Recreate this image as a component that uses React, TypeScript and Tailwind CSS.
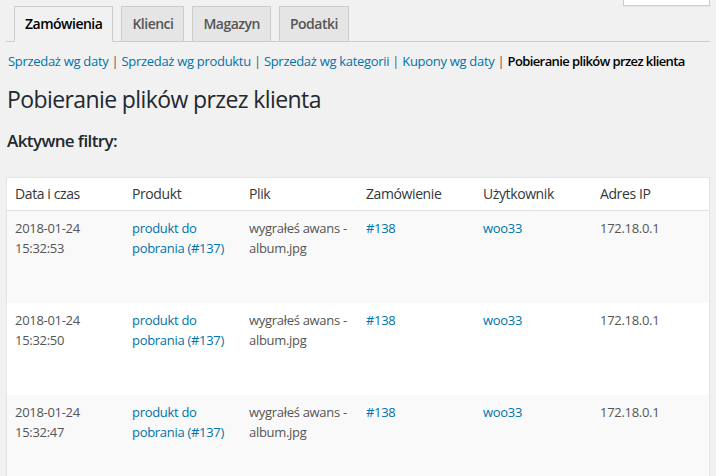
const tabs = ['Zamówienia', 'Klienci', 'Magazyn', 'Podatki'];

const reportLinks = [
  'Sprzedaż wg daty',
  'Sprzedaż wg produktu',
  'Sprzedaż wg kategorii',
  'Kupony wg daty',
];

const columns = ['Data i czas', 'Produkt', 'Plik', 'Zamówienie', 'Użytkownik', 'Adres IP'];

const downloads = [
  { date: '2018-01-24', time: '15:32:53' },
  { date: '2018-01-24', time: '15:32:50' },
  { date: '2018-01-24', time: '15:32:47' },
];

export default function App() {
  return (
    <div className="min-h-[476px] bg-[#f1f1f1] text-[#444] font-['Open_Sans',sans-serif] overflow-hidden">
      {/* Screen options stub */}
      <div className="flex justify-end pr-[6px]">
        <div className="w-[87px] h-[6px] bg-white border border-t-0 border-[#ccc] shadow-[0_1px_1px_rgba(0,0,0,0.04)]" />
      </div>

      {/* Tabs */}
      <div className="mx-[6px] flex gap-[8px] pl-[8px] border-b border-[#ccc]">
        {tabs.map((tab, i) => (
          <div
            key={tab}
            className={
              i === 0
                ? 'px-[10px] py-[5px] text-[14px] leading-[24px] font-semibold tracking-[-0.5px] border border-[#ccc] border-b-[#f1f1f1] -mb-px bg-[#f1f1f1] text-black'
                : 'px-[10px] py-[5px] text-[14px] leading-[24px] font-semibold tracking-[-0.5px] border border-[#ccc] -mb-px bg-[#e5e5e5] text-[#555]'
            }
          >
            {tab}
          </div>
        ))}
      </div>

      {/* Report links */}
      <div className="mt-[6px] pl-[8px] text-[13px] leading-[26px] tracking-[-0.3px] whitespace-nowrap">
        {reportLinks.map((link) => (
          <span key={link}>
            <span className="text-[#0073aa]">{link}</span>
            <span className="text-[#555]"> | </span>
          </span>
        ))}
        <span className="text-black font-semibold tracking-[-0.6px]">Pobieranie plików przez klienta</span>
      </div>

      <h1 className="mt-[10px] pl-[7px] text-[23px] leading-[30px] font-normal tracking-[-0.6px] text-[#23282d]">
        Pobieranie plików przez klienta
      </h1>

      <h2 className="mt-[16px] pl-[7px] text-[17px] leading-[22px] font-semibold tracking-[-0.6px] text-[#23282d]">
        Aktywne filtry:
      </h2>

      {/* Downloads table */}
      <div className="mt-[25px] mx-[6px] bg-white border border-[#e5e5e5] shadow-[0_1px_1px_rgba(0,0,0,0.04)]">
        <div className="grid grid-cols-6 border-b border-[#e1e1e1]">
          {columns.map((col) => (
            <div
              key={col}
              className="px-[8px] py-[7px] text-[14px] leading-[18px] tracking-[-0.4px] text-[#32373c] whitespace-nowrap"
            >
              {col}
            </div>
          ))}
        </div>
        {downloads.map((row, i) => (
          <div
            key={row.time}
            className={
              i % 2 === 0
                ? 'grid grid-cols-6 h-[92px] bg-[#f9f9f9] text-[13px] leading-[19.5px] tracking-[-0.3px] text-[#555] whitespace-nowrap'
                : 'grid grid-cols-6 h-[92px] bg-white text-[13px] leading-[19.5px] tracking-[-0.3px] text-[#555] whitespace-nowrap'
            }
          >
            <div className="px-[8px] pt-[8px]">
              {row.date}
              <br />
              {row.time}
            </div>
            <div className="px-[8px] pt-[8px] text-[#0073aa]">
              produkt do
              <br />
              pobrania (#137)
            </div>
            <div className="px-[8px] pt-[8px]">
              wygrałeś awans -
              <br />
              album.jpg
            </div>
            <div className="px-[8px] pt-[8px] text-[#0073aa]">#138</div>
            <div className="px-[8px] pt-[8px] text-[#0073aa]">woo33</div>
            <div className="px-[8px] pt-[8px]">172.18.0.1</div>
          </div>
        ))}
      </div>
    </div>
  );
}
